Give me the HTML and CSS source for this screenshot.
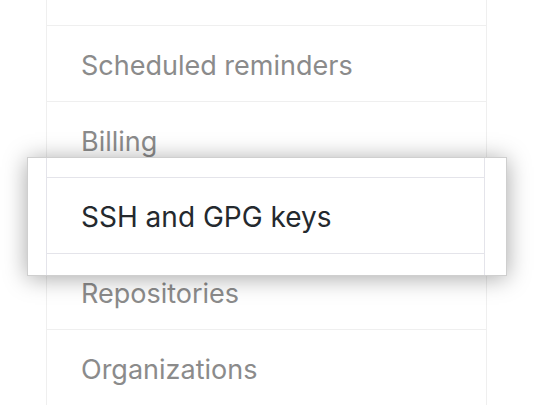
FILE: index.html
```html
<!DOCTYPE html>
<html>
<head>
<meta charset="utf-8">
<link rel="stylesheet" href="styles.css">
</head>
<body>
<div class="menu">
  <div class="item item-partial"></div>
  <div class="item">Scheduled reminders</div>
  <div class="item">Billing</div>
  <div class="item item-lifted">SSH and GPG keys</div>
  <div class="item">Repositories</div>
  <div class="item">Organizations</div>
</div>
<div class="popup">
  <div class="popup-inner">
    <div class="popup-row">SSH and GPG keys</div>
  </div>
</div>
</body>
</html>
```

FILE: styles.css
```css
html, body {
  margin: 0;
  padding: 0;
  background: #ffffff;
  overflow: hidden;
}
body {
  position: relative;
  width: 536px;
  height: 405px;
  font-family: Inter, "Liberation Sans", Arial, sans-serif;
}
.menu {
  margin-left: 46px;
  width: 439px;
  border-left: 1px solid #efefef;
  border-right: 1px solid #efefef;
}
.item {
  border-bottom: 1px solid #efefef;
  display: flex;
  align-items: center;
  padding-left: 34px;
  padding-top: 3px;
  box-sizing: border-box;
  height: 76px;
  font-size: 27px;
  color: #8b8b8b;
}
.item-partial {
  height: 26px;
}
.item-lifted {
  visibility: hidden;
}
.popup {
  position: absolute;
  left: 27px;
  top: 157px;
  width: 478px;
  height: 117px;
  background: #ffffff;
  border: 1px solid #cfcfcf;
  box-shadow: 0 2px 22px rgba(0, 0, 0, 0.35);
}
.popup-inner {
  margin-left: 18px;
  width: 439px;
  height: 100%;
  border-left: 1px solid #e4e4ea;
  border-right: 1px solid #e4e4ea;
  padding-top: 19px;
  box-sizing: border-box;
}
.popup-row {
  height: 77px;
  box-sizing: border-box;
  border-top: 1px solid #e4e4ea;
  border-bottom: 1px solid #e4e4ea;
  display: flex;
  align-items: center;
  padding-left: 34px;
  padding-top: 3px;
  font-size: 28px;
  color: #24292e;
}
```
